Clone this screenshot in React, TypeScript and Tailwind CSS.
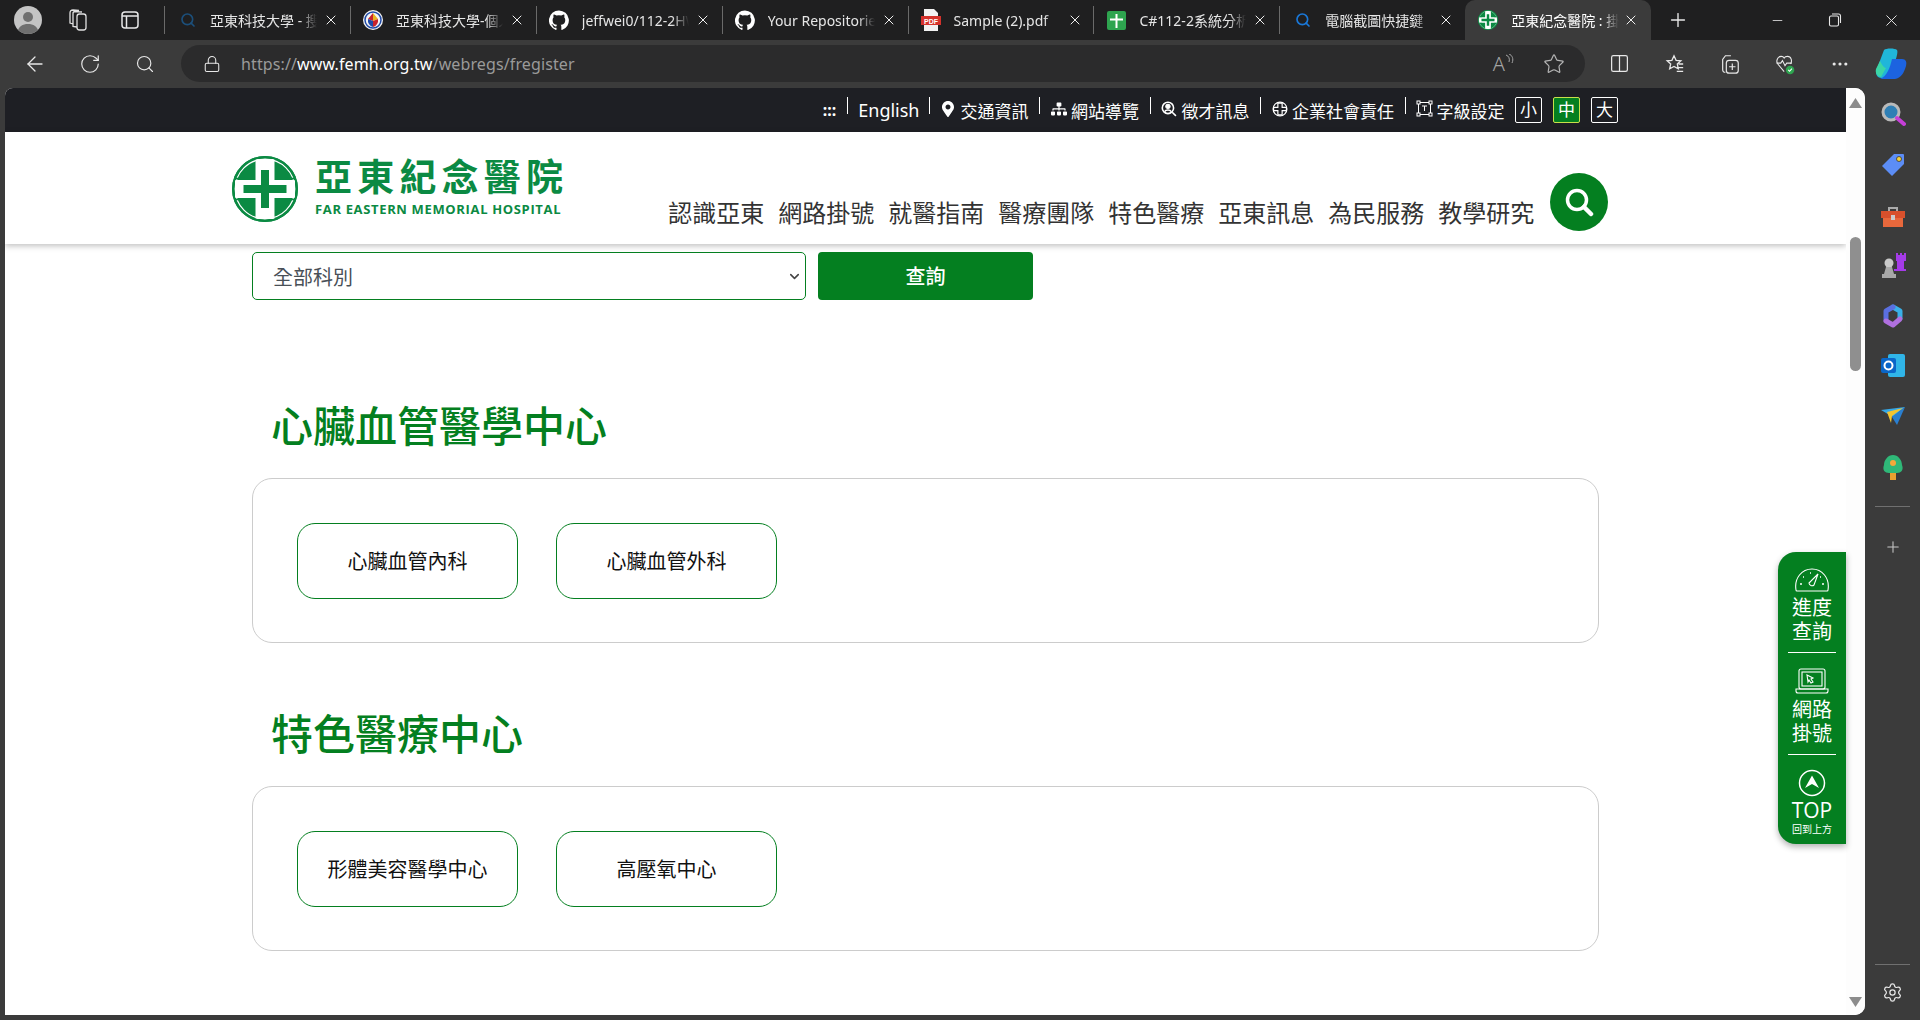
import { ArrowLeft, ChevronDown, Columns2, Lock, Minus, MoreHorizontal, Plus, RotateCw, Search, Settings, Star, X } from "lucide-react";
import { FaMapMarkerAlt, FaSitemap } from "react-icons/fa";

const FemhMark = ({ size = 66 }: { size?: number }) => (
  <svg width={size} height={size} viewBox="0 0 66 66">
    <circle cx="33" cy="33" r="33" fill="#0b8a43" />
    <path d="M23.500 3h19v21h20.500v18H42.500v21h-19V42H3V24h20.500z" fill="#fff" />
    <circle cx="33" cy="33" r="29.800" fill="none" stroke="#fff" strokeWidth="1.200" />
    <circle cx="33" cy="33" r="32" fill="none" stroke="#0b8a43" strokeWidth="2" />
    <path d="M29 14h8v15h17.500v8H37v15h-8V37H11.500v-8H29z" fill="#0b8a43" />
    <path d="M4 22.500h9M4 43.500h9M53 22.500h9M53 43.500h9" stroke="#0b8a43" strokeWidth="1.500" />
  </svg>
);

const GithubIcon = () => (
  <svg width="20" height="20" viewBox="0 0 24 24" fill="#fff">
    <path d="M12 .5a12 12 0 0 0-3.800 23.400c.6.100.8-.3.8-.6v-2c-3.300.7-4-1.600-4-1.600-.6-1.400-1.400-1.800-1.400-1.800-1-.7.1-.7.1-.7 1.200.1 1.800 1.200 1.800 1.200 1 1.800 2.800 1.300 3.500 1 .1-.8.4-1.300.8-1.600-2.700-.3-5.500-1.300-5.500-5.900 0-1.300.5-2.400 1.200-3.200-.1-.3-.5-1.500.1-3.200 0 0 1-.3 3.300 1.200a11.500 11.500 0 0 1 6 0c2.300-1.500 3.300-1.200 3.300-1.200.6 1.700.2 2.900.1 3.200.8.8 1.200 1.900 1.200 3.200 0 4.600-2.800 5.600-5.500 5.900.4.400.8 1.100.8 2.200v3.300c0 .3.200.7.800.6A12 12 0 0 0 12 .5z" />
  </svg>
);

const SearchFavicon = ({ color }: { color: string }) => (
  <Search size={16} color={color} strokeWidth={2.5} />
);

const EduFavicon = () => (
  <svg width="20" height="20" viewBox="0 0 20 20">
    <circle cx="10" cy="10" r="10" fill="#f4f4f4" />
    <circle cx="10" cy="10" r="8" fill="none" stroke="#1f4aa8" strokeWidth="1.500" />
    <path d="M10 3 5 9l5 2z" fill="#c8232c" />
    <path d="m10 3 5 6-5 2z" fill="#e8b21e" />
    <path d="m5 9 5 2v6a7 7 0 0 1-5-8z" fill="#1f4aa8" />
    <path d="m15 9-5 2v6a7 7 0 0 0 5-8z" fill="#c8232c" />
  </svg>
);

const PdfFavicon = () => (
  <svg width="20" height="22" viewBox="0 0 20 22">
    <path d="M3 0h10l4 4v18H3z" fill="#f2f2f2" />
    <rect x="0" y="7" width="20" height="9" fill="#d4322c" />
    <text x="10" y="14.500" textAnchor="middle" fontSize="7" fontWeight="700" fill="#fff" fontFamily="Liberation Sans, sans-serif">PDF</text>
  </svg>
);

const SheetFavicon = () => (
  <svg width="19" height="19" viewBox="0 0 19 19">
    <rect width="19" height="19" rx="2" fill="#2ea44f" />
    <path d="M8.500 3h2v4.500H16v2h-5.500V17h-2V9.500H3v-2h5.500z" fill="#fff" />
  </svg>
);

const tabs = [
  { title: "亞東科技大學 - 搜尋", icon: <SearchFavicon color="#1c4f7a" /> },
  { title: "亞東科技大學-個人", icon: <EduFavicon /> },
  { title: "jeffwei0/112-2HW", icon: <GithubIcon /> },
  { title: "Your Repositories", icon: <GithubIcon /> },
  { title: "Sample (2).pdf", icon: <PdfFavicon /> },
  { title: "C#112-2系統分析", icon: <SheetFavicon /> },
  { title: "電腦截圖快捷鍵", icon: <SearchFavicon color="#1a78d8" /> },
];

const BrowserTab = ({ title, icon }: { title: string; icon: React.ReactNode }) => (
  <div className="flex h-[40px] w-[185.900px] shrink-0 items-center">
    <span className="h-[28px] w-px bg-[#6a6a6a]" />
    <span className="flex w-[45px] justify-center">{icon}</span>
    <span className="w-[107px] overflow-hidden whitespace-nowrap text-[14px] text-[#e6e6e6] [mask-image:linear-gradient(to_right,black_84%,transparent)]">
      {title}
    </span>
    <X size={16} color="#f0f0f0" strokeWidth={1.5} className="ml-[6px]" />
  </div>
);

const TabStrip = () => (
  <div className="flex h-[40px] items-center bg-[#1f1f20]">
    <div className="ml-[14px] flex h-[28px] w-[28px] items-end justify-center overflow-hidden rounded-full bg-[#c4c4c4]">
      <svg width="28" height="28" viewBox="0 0 28 28">
        <circle cx="14" cy="11" r="5" fill="#6f6f6f" />
        <path d="M3 28c1-8 6-10 11-10s10 2 11 10z" fill="#6f6f6f" />
      </svg>
    </div>
    <svg width="24" height="24" viewBox="0 0 24 24" fill="none" stroke="#e0e0e0" strokeWidth="1.300" className="ml-[24px]">
      <rect x="11" y="6" width="9" height="16" rx="2.500" />
      <path d="M11 19 7 18.500V5.500C7 4 8 3.500 9 3.500l7 .5M7 16l-3-1V5c0-2 1-3 3-3l6 .5" />
    </svg>
    <svg width="22" height="22" viewBox="0 0 22 22" fill="none" stroke="#e8e8e8" strokeWidth="1.500" className="ml-[29px]">
      <rect x="3" y="3" width="16" height="16" rx="3" />
      <path d="M7.500 7v12M3 7h16" />
    </svg>
    <div className="ml-[23px] flex">
      {tabs.map((tab) => (
        <BrowserTab key={tab.title} title={tab.title} icon={tab.icon} />
      ))}
      <div className="flex h-[40px] w-[186px] shrink-0 items-center rounded-t-[10px] bg-[#3b3b3b]">
        <span className="flex w-[46px] justify-center">
          <FemhMark size={20} />
        </span>
        <span className="w-[108px] overflow-hidden whitespace-nowrap text-[14px] text-white [mask-image:linear-gradient(to_right,black_84%,transparent)]">
          亞東紀念醫院 : 掛號
        </span>
        <X size={16} color="#f0f0f0" strokeWidth={1.5} className="ml-[4px]" />
      </div>
    </div>
    <Plus size={22} color="#e8e8e8" strokeWidth={1.5} className="ml-[16px]" />
    <div className="ml-auto flex items-center">
      <span className="flex w-[57px] justify-center">
        <Minus size={15} color="#e8e8e8" strokeWidth={1.3} />
      </span>
      <span className="flex w-[57px] justify-center">
        <svg width="14" height="14" viewBox="0 0 14 14" fill="none" stroke="#e8e8e8" strokeWidth="1.100">
          <rect x="1.500" y="3" width="9" height="10" rx="1.500" />
          <path d="M4 1h6.500A2 2 0 0 1 12.500 3v7" />
        </svg>
      </span>
      <span className="flex w-[57px] justify-center">
        <X size={19} color="#e8e8e8" strokeWidth={1.2} />
      </span>
    </div>
  </div>
);

const Toolbar = () => (
  <div className="flex h-[48px] items-start bg-[#3b3b3b] pl-[7px] pt-[5px] text-[#e8e8e8]">
    <span className="flex h-[37px] w-[55px] items-center justify-center">
      <ArrowLeft size={24} strokeWidth={1.3} />
    </span>
    <span className="flex h-[37px] w-[55px] items-center justify-center">
      <RotateCw size={22} strokeWidth={1.3} />
    </span>
    <span className="flex h-[37px] w-[55px] items-center justify-center">
      <Search size={20} strokeWidth={1.4} />
    </span>
    <div className="ml-[9px] flex h-[37px] w-[1404px] items-center rounded-full bg-[#2b2b2c] pl-[22px]">
      <Lock size={18} strokeWidth={1.4} />
      <span className="ml-[20px] text-[16px] tracking-[0.120px] text-[#9a9a9a]">
        https://<span className="text-white">www.femh.org.tw</span>/webregs/fregister
      </span>
      <span className="ml-auto flex items-start text-[20px] font-light leading-none text-[#a5a5a5]">
        A
        <svg width="9" height="12" viewBox="0 0 9 12" fill="none" stroke="#a5a5a5" strokeWidth="1">
          <path d="M1 1c3 1 4 4 3 7M4 0c3 1 5 5 3 9" />
        </svg>
      </span>
      <Star size={22} strokeWidth={1.3} color="#b5b5b5" className="ml-[29px] mr-[20px]" />
    </div>
    <div className="flex h-[37px] items-center">
      <span className="ml-[23px] flex w-[22px] justify-center">
        <Columns2 size={21} strokeWidth={1.4} />
      </span>
      <span className="ml-[33px] flex w-[22px] justify-center">
        <svg width="24" height="24" viewBox="0 0 24 24" fill="none" stroke="currentColor" strokeWidth="1.400">
          <path d="M12 3l2.300 5 5.200.5-3.900 3.500 1.100 5.200L12 14.600l-4.700 2.600 1.100-5.200L4.500 8.500 9.700 8zM17 12h5M16 16h6M15 20h7" />
        </svg>
      </span>
      <span className="ml-[34px] flex w-[22px] justify-center">
        <svg width="24" height="24" viewBox="0 0 24 24" fill="none" stroke="currentColor" strokeWidth="1.300">
          <path d="M7 21c-2 0-3-1-3-3V7l3-4h6" />
          <rect x="8" y="8" width="13" height="14" rx="3" />
          <path d="M14.500 11.500v7M11 15h7" />
        </svg>
      </span>
      <span className="ml-[33px] flex w-[22px] justify-center">
        <svg width="26" height="26" viewBox="0 0 26 26" fill="none" stroke="currentColor" strokeWidth="1.300">
          <path d="M12 22 4.500 13C2 10 4 4 8.500 4c2 0 3 1 3.500 2 .5-1 2-2 4-2 4 0 6 5 3.500 9" />
          <path d="M3 12h5l2-3 3 6 2-3h6" />
          <circle cx="19" cy="20" r="5" fill="#2ea44f" stroke="none" />
          <path d="m16.800 20 1.600 1.600 2.800-3" stroke="#fff" />
        </svg>
      </span>
      <span className="ml-[33px] flex w-[22px] justify-center">
        <MoreHorizontal size={20} strokeWidth={1.8} />
      </span>
      <svg width="36" height="34" viewBox="0 0 36 34" className="ml-[21px]">
        <path d="M12 3c2-2 11-2 13 0 2 3-4 18-8 25-2 3-8 4-11 2-3-3-2-7 0-11z" fill="#20b6d9" />
        <path d="M20 12h10c4 0 5 3 4 7-2 7-5 12-11 13H8c7-3 10-11 12-20z" fill="#1c63e0" />
        <path d="M8 14c2 4 4 7 6 7l-5 9c-4-1-6-4-5-8z" fill="#3cd6a5" />
      </svg>
    </div>
  </div>
);

const SidebarIcons = () => (
  <aside className="flex w-[55px] shrink-0 flex-col items-center">
    <svg width="26" height="26" viewBox="0 0 26 26" className="mt-[13px]">
      <circle cx="11" cy="11" r="8" fill="#2f7fb5" stroke="#b9b9b9" strokeWidth="3" />
      <path d="m17 17 7 6" stroke="#c63fd8" strokeWidth="4" strokeLinecap="round" />
    </svg>
    <svg width="26" height="26" viewBox="0 0 26 26" className="mt-[25px]">
      <path d="M14 2h9a1 1 0 0 1 1 1v9L12 24 2 14z" fill="#5c8df6" />
      <circle cx="19" cy="7" r="2.500" fill="#f4d23c" stroke="#333" strokeWidth=".8" />
    </svg>
    <svg width="26" height="24" viewBox="0 0 26 24" className="mt-[27px]">
      <path d="M9 6V3h8v3" fill="none" stroke="#aaa" strokeWidth="2" />
      <rect x="1" y="6" width="24" height="7" fill="#d8502c" />
      <rect x="3" y="13" width="20" height="9" fill="#e8683c" />
      <rect x="11" y="10" width="4" height="5" fill="#ccc" />
    </svg>
    <svg width="28" height="28" viewBox="0 0 28 28" className="mt-[22px]">
      <path d="M17 2h2v2h2V2h2v2h2V2h2v8h-2v8h2v2H15v-2h3v-8h-1z" fill="#a53be8" />
      <circle cx="10" cy="12" r="4.500" fill="#c9c9c9" />
      <path d="M7 16h6l2 7H5zM3 23h14v4H3z" fill="#a8a8a8" />
    </svg>
    <svg width="26" height="26" viewBox="0 0 26 26" fill="none" strokeWidth="5" strokeLinecap="round" strokeLinejoin="round" className="mt-[24px]">
      <path d="M13 4l7 4v7" stroke="#3ab0e8" />
      <path d="M6 17V8l7-4" stroke="#5a6fe0" />
      <path d="M20 16l-7 6-7-4" stroke="#b070e0" />
    </svg>
    <svg width="26" height="26" viewBox="0 0 26 26" className="mt-[24px]">
      <rect x="8" y="1" width="17" height="23" rx="2" fill="#30b5e8" />
      <rect x="1" y="5" width="15" height="15" rx="2" fill="#0a66c8" />
      <circle cx="8.500" cy="12.500" r="4" fill="none" stroke="#fff" strokeWidth="2" />
    </svg>
    <svg width="26" height="20" viewBox="0 0 26 20" className="mt-[27px]">
      <path d="M1 4 25 1 13 11z" fill="#35a8e8" />
      <path d="M25 1 17 19l-5-8z" fill="#2a7fd0" />
      <path d="M7 6 23 2 12 10l-1 7z" fill="#f4c430" />
    </svg>
    <svg width="24" height="26" viewBox="0 0 24 26" className="mt-[28px]">
      <rect x="9" y="17" width="6" height="9" fill="#e8a030" />
      <path d="M12 1c5 0 9 5 9 10 2 5-1 8-5 8H8c-4 0-7-3-5-8 0-5 4-10 9-10z" fill="#2fb878" />
      <circle cx="12" cy="9" r="3" fill="#f4a83a" />
    </svg>
    <span className="mt-[26px] h-px w-[35px] bg-[#707070]" />
    <Plus size={18} color="#c8c8c8" strokeWidth={1.4} className="mt-[31px]" />
    <span className="mt-auto h-px w-[35px] bg-[#707070]" />
    <Settings size={21} color="#e8e8e8" strokeWidth={1.4} className="mb-[17px] mt-[17px]" />
  </aside>
);

const utilityLinks = [
  { label: "交通資訊", icon: <FaMapMarkerAlt size={16} /> },
  { label: "網站導覽", icon: <FaSitemap size={16} /> },
  {
    label: "徵才訊息",
    icon: (
      <svg width="16" height="16" viewBox="0 0 15 15" fill="none" stroke="#fff">
        <circle cx="6.500" cy="6.500" r="5.300" strokeWidth="1.500" />
        <circle cx="6.500" cy="5" r="2" fill="#fff" />
        <path d="M3.500 10c1-2 5-2 6 0M10.500 10.500 14 14" strokeWidth="1.500" />
      </svg>
    ),
  },
  {
    label: "企業社會責任",
    icon: (
      <svg width="16" height="16" viewBox="0 0 15 15" fill="none" stroke="#fff" strokeWidth="1.100">
        <circle cx="7.500" cy="7.500" r="6.500" />
        <path d="M5.500 2v4H1.500v3h4v4h4V9h4V6h-4V2z" />
      </svg>
    ),
  },
  {
    label: "字級設定",
    icon: (
      <svg width="17" height="17" viewBox="0 0 17 17" fill="none" stroke="#fff" strokeWidth="1">
        <rect x="2.500" y="2.500" width="12" height="12" />
        <rect x="1" y="1" width="3" height="3" fill="#1e1f24" />
        <rect x="13" y="1" width="3" height="3" fill="#1e1f24" />
        <rect x="1" y="13" width="3" height="3" fill="#1e1f24" />
        <rect x="13" y="13" width="3" height="3" fill="#1e1f24" />
        <path d="M6 6h5M8.500 6v5" />
      </svg>
    ),
  },
];

const UtilityBar = () => (
  <div className="flex h-[44px] shrink-0 items-center justify-end bg-[#1e1f24] pr-[228px] text-white">
    <span className="mr-[11px] text-[16px] font-bold">:::</span>
    <span className="mb-[9px] h-[17px] w-px bg-white" />
    <span className="ml-[10px] mr-[9px] text-[18px] leading-[24px]">English</span>
    <span className="mb-[9px] h-[17px] w-px bg-white" />
    {utilityLinks.map((link) => (
      <div key={link.label} className="flex items-center">
        <span className="mb-[3px] ml-[10px] flex w-[17px] justify-center">{link.icon}</span>
        <span className="ml-[4px] mr-[10.500px] mt-[3px] text-[17px] leading-[24px]">{link.label}</span>
        {link.label !== "字級設定" && <span className="mb-[9px] h-[17px] w-px bg-white" />}
      </div>
    ))}
    <div className="flex gap-[11px]">
      <span className="flex h-[26px] w-[27px] items-center justify-center rounded-[2px] border border-white text-[17px]">小</span>
      <span className="flex h-[26px] w-[27px] items-center justify-center rounded-[2px] border border-[#c8e04a] bg-[#047f20] text-[17px]">中</span>
      <span className="flex h-[26px] w-[27px] items-center justify-center rounded-[2px] border border-white text-[17px]">大</span>
    </div>
  </div>
);

const navItems = ["認識亞東", "網路掛號", "就醫指南", "醫療團隊", "特色醫療", "亞東訊息", "為民服務", "教學研究"];

const SiteHeader = () => (
  <header className="flex h-[112px] shrink-0 items-start bg-white pl-[227px] shadow-[0_2px_6px_rgba(0,0,0,0.25)]">
    <div className="mt-[24px] flex items-start">
      <FemhMark />
      <div className="ml-[17px] mt-[1px] flex flex-col">
        <span className="text-[37px] font-bold leading-[40px] tracking-[5.200px] text-[#0b8a43]">亞東紀念醫院</span>
        <span className="mt-[5px] whitespace-nowrap font-['Open_Sans',sans-serif] text-[13px] font-bold leading-[14px] tracking-[0.650px] text-[#0b8a43]">
          FAR EASTERN MEMORIAL HOSPITAL
        </span>
      </div>
    </div>
    <nav className="ml-[100px] mt-[63px] flex gap-[14px]">
      {navItems.map((item) => (
        <span key={item} className="text-[24px] leading-[36px] text-[#333]">
          {item}
        </span>
      ))}
    </nav>
    <div className="ml-[15.500px] mt-[41px] flex h-[58px] w-[58px] items-center justify-center rounded-full bg-[#047f20]">
      <svg width="30" height="30" viewBox="0 0 30 30" fill="none" stroke="#fff">
        <circle cx="13" cy="13" r="9.500" strokeWidth="3.500" />
        <path d="m20 20 7 7" strokeWidth="4.500" strokeLinecap="round" />
      </svg>
    </div>
  </header>
);

const sections = [
  { title: "心臟血管醫學中心", depts: ["心臟血管內科", "心臟血管外科"] },
  { title: "特色醫療中心", depts: ["形體美容醫學中心", "高壓氧中心"] },
];

const DeptSection = ({ title, depts }: { title: string; depts: string[] }) => (
  <section>
    <h2 className="pl-[19px] text-[42px] font-medium leading-[60px] text-[#047f20]">{title}</h2>
    <div className="mt-[22px] flex h-[165px] w-[1347px] gap-[38px] rounded-[20px] border border-[#ccc] pl-[44px] pt-[44px]">
      {depts.map((dept) => (
        <button
          key={dept}
          type="button"
          className="flex h-[76px] w-[221px] items-center justify-center rounded-[18px] border border-[#047f20] pt-[2px] text-[20px] text-[#111]"
        >
          {dept}
        </button>
      ))}
    </div>
  </section>
);

const FloatingWidget = () => (
  <div className="absolute right-[19px] top-[464px] flex h-[292px] w-[68px] flex-col items-center rounded-l-[18px] bg-[#047f20] text-white shadow-[0_3px_6px_rgba(0,0,0,0.3)]">
    <svg width="36" height="24" viewBox="0 0 36 24" fill="none" stroke="#fff" strokeWidth="1.100" className="mt-[16px]">
      <path d="M2 22C0 10 8 1 18 1s18 9 16 21a1 1 0 0 1-1 1H3a1 1 0 0 1-1-1z" />
      <path d="m24 6-4 11a3 3 0 0 1-5-2z" />
      <path d="M6 16h2M9 9h1M16 5h1M30 16h-2M27 9h-1" strokeWidth="1.600" />
    </svg>
    <span className="mt-[4px] text-[20px] leading-[24px]">進度</span>
    <span className="text-[20px] leading-[24px]">查詢</span>
    <span className="mt-[8px] h-px w-[48px] bg-white" />
    <svg width="34" height="26" viewBox="0 0 34 26" fill="none" stroke="#fff" strokeWidth="1.100" className="mt-[15px]">
      <rect x="4" y="1" width="26" height="20" rx="2" />
      <rect x="7" y="4" width="20" height="14" />
      <path d="M1 21h32v2a2 2 0 0 1-2 2H3a2 2 0 0 1-2-2z" />
      <path d="m12 7 6 3-2 1 2 3-2 1-2-3-1 2z" />
    </svg>
    <span className="mt-[4px] text-[20px] leading-[24px]">網路</span>
    <span className="text-[20px] leading-[24px]">掛號</span>
    <span className="mt-[8px] h-px w-[48px] bg-white" />
    <svg width="28" height="28" viewBox="0 0 28 28" className="mt-[14px]">
      <circle cx="14" cy="14" r="12.500" fill="none" stroke="#fff" strokeWidth="1.500" />
      <path d="M14 6.500 21 19l-7-4-7 4z" fill="#fff" />
    </svg>
    <span className="mt-[2px] font-['Open_Sans',sans-serif] text-[21px] leading-[22px]">TOP</span>
    <span className="mt-[3px] text-[10px] leading-[11px]">回到上方</span>
  </div>
);

const PageScrollbar = () => (
  <div className="flex w-[19px] shrink-0 flex-col items-center bg-[#fdfdfd]">
    <svg width="13" height="10" viewBox="0 0 13 10" className="mt-[10px]">
      <path d="M6.500 0 13 10H0z" fill="#8c8c8c" />
    </svg>
    <span className="mt-[129px] h-[134px] w-[11px] rounded-full bg-[#8f8f8f]" />
    <svg width="13" height="10" viewBox="0 0 13 10" className="mb-[8px] mt-auto">
      <path d="M6.500 10 13 0H0z" fill="#8c8c8c" />
    </svg>
  </div>
);

export default function App() {
  return (
    <div className="flex h-[1020px] w-[1920px] flex-col overflow-hidden bg-[#3b3b3b] font-['Noto_Sans','Noto_Sans_CJK_TC',sans-serif]">
      <TabStrip />
      <Toolbar />
      <div className="flex min-h-0 flex-1">
        <div className="relative ml-[5px] mb-[5px] flex min-w-0 flex-1 overflow-hidden rounded-tl-[8px] rounded-r-[10px] bg-white">
          <div className="flex min-w-0 flex-1 flex-col">
            <UtilityBar />
            <SiteHeader />
            <main className="pl-[247px] pt-[8px]">
              <div className="flex gap-[12px]">
                <div className="relative h-[48px] w-[554px]">
                  <select className="h-full w-full appearance-none rounded-[5px] border border-[#047f20] bg-white pl-[20px] pt-[3px] text-[20px] text-[#495057]">
                    <option>全部科別</option>
                  </select>
                  <ChevronDown size={15} color="#444" strokeWidth={2.5} className="pointer-events-none absolute right-[4px] top-[17px]" />
                </div>
                <button type="button" className="h-[48px] w-[215px] rounded-[4px] bg-[#047f20] pt-[2px] text-[20px] font-medium text-white">
                  查詢
                </button>
              </div>
              <div className="mt-[96px] flex flex-col gap-[61px]">
                {sections.map((section) => (
                  <DeptSection key={section.title} title={section.title} depts={section.depts} />
                ))}
              </div>
            </main>
          </div>
          <PageScrollbar />
          <FloatingWidget />
        </div>
        <SidebarIcons />
      </div>
    </div>
  );
}
